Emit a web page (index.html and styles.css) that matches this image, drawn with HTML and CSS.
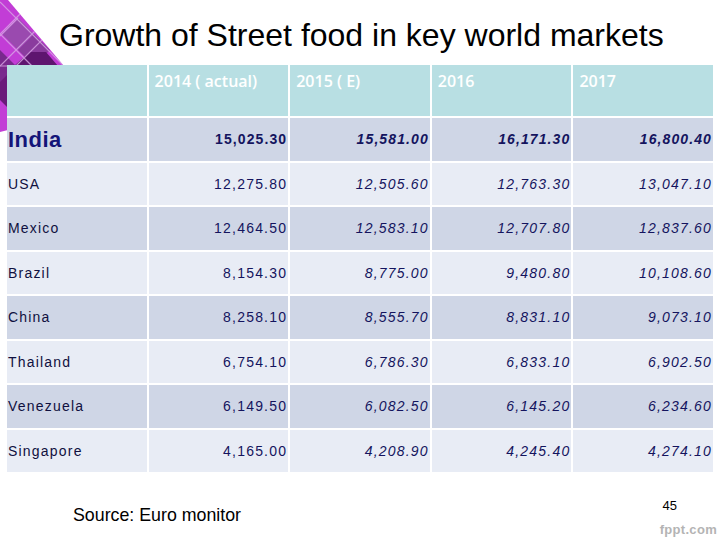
FILE: index.html
```html
<!DOCTYPE html>
<html>
<head>
<meta charset="utf-8">
<link rel="stylesheet" href="styles.css">
</head>
<body>
<div class="slide">
  <svg class="deco" width="70" height="135" viewBox="0 0 70 135">
    <defs>
      <clipPath id="tri"><polygon points="0,0 8,0 64,66 64,118 0,118"/></clipPath>
    </defs>
    <g clip-path="url(#tri)">
      <rect x="0" y="0" width="70" height="135" fill="#c23ed6"/>
      <polygon points="2,34 18,18 34,34 18,50" fill="#9a4ab0"/>
      <polygon points="18,50 34,34 50,50 34,66" fill="#8a3c9e"/>
      <polygon points="14,66 30,52 46,52 58,66" fill="#5e1670"/>
      <polygon points="0,66 64,66 64,118 0,118" fill="#6a1a7a"/>
      <polygon points="0,50 16,66 0,82" fill="#7a2a8e"/>
      <g stroke="#d9a8e6" stroke-width="1.2" fill="none" opacity="0.8">
        <line x1="0" y1="34" x2="34" y2="0"/>
        <line x1="0" y1="66" x2="50" y2="16"/>
        <line x1="10" y1="72" x2="66" y2="16"/>
        <line x1="0" y1="2" x2="64" y2="66"/>
        <line x1="0" y1="34" x2="34" y2="68"/>
        <line x1="18" y1="18" x2="0" y2="36"/>
        <line x1="0" y1="66" x2="64" y2="66"/>
      </g>
    </g>
    <polygon points="0,100 8,108 8,130 0,132" fill="#c23ed6"/>
  </svg>
  <h1 class="title">Growth of Street food in key world markets</h1>
  <div class="grid">
    <div class="hd"></div>
    <div class="hd">2014 ( actual)</div>
    <div class="hd">2015 ( E)</div>
    <div class="hd">2016</div>
    <div class="hd">2017</div>

    <div class="c lbl dark big">India</div>
    <div class="c num dark b">15,025.30</div>
    <div class="c num dark b i">15,581.00</div>
    <div class="c num dark b i">16,171.30</div>
    <div class="c num dark b i">16,800.40</div>

    <div class="c lbl light">USA</div>
    <div class="c num light">12,275.80</div>
    <div class="c num light i">12,505.60</div>
    <div class="c num light i">12,763.30</div>
    <div class="c num light i">13,047.10</div>

    <div class="c lbl dark">Mexico</div>
    <div class="c num dark">12,464.50</div>
    <div class="c num dark i">12,583.10</div>
    <div class="c num dark i">12,707.80</div>
    <div class="c num dark i">12,837.60</div>

    <div class="c lbl light">Brazil</div>
    <div class="c num light">8,154.30</div>
    <div class="c num light i">8,775.00</div>
    <div class="c num light i">9,480.80</div>
    <div class="c num light i">10,108.60</div>

    <div class="c lbl dark">China</div>
    <div class="c num dark">8,258.10</div>
    <div class="c num dark i">8,555.70</div>
    <div class="c num dark i">8,831.10</div>
    <div class="c num dark i">9,073.10</div>

    <div class="c lbl light">Thailand</div>
    <div class="c num light">6,754.10</div>
    <div class="c num light i">6,786.30</div>
    <div class="c num light i">6,833.10</div>
    <div class="c num light i">6,902.50</div>

    <div class="c lbl dark">Venezuela</div>
    <div class="c num dark">6,149.50</div>
    <div class="c num dark i">6,082.50</div>
    <div class="c num dark i">6,145.20</div>
    <div class="c num dark i">6,234.60</div>

    <div class="c lbl light">Singapore</div>
    <div class="c num light">4,165.00</div>
    <div class="c num light i">4,208.90</div>
    <div class="c num light i">4,245.40</div>
    <div class="c num light i">4,274.10</div>
  </div>
  <div class="footer">
    <div class="source">Source: Euro monitor</div>
    <div class="page">45</div>
  </div>
  <div class="brand">fppt.com</div>
</div>
</body>
</html>
```

FILE: styles.css
```css
html, body {
  margin: 0;
  padding: 0;
  background: #ffffff;
}
.slide {
  position: relative;
  width: 720px;
  height: 540px;
  overflow: hidden;
  font-family: "Liberation Sans", Arial, sans-serif;
}
.deco {
  position: absolute;
  left: 0;
  top: 0;
}
.title {
  position: relative;
  margin: 0;
  height: 65px;
  box-sizing: border-box;
  padding: 17px 0 0 59px;
  font-size: 32px;
  line-height: 36px;
  font-weight: normal;
  color: #000000;
}
.grid {
  position: relative;
  margin-left: 7px;
  width: 706px;
  display: grid;
  grid-template-columns: repeat(5, 1fr);
  grid-template-rows: 51px repeat(8, 42.5px);
  gap: 2px;
  background: #ffffff;
}
.hd {
  background: #b8dfe3;
  color: #ffffff;
  font-family: "Open Sans", sans-serif;
  font-size: 16px;
  font-weight: 600;
  line-height: 20px;
  padding: 6px 0 0 6px;
}
.c {
  display: flex;
  align-items: center;
  font-size: 14px;
  letter-spacing: 1.2px;
  color: #14145e;
}
.dark { background: #cfd6e6; }
.light { background: #e8ecf5; }
.lbl {
  padding-left: 1px;
  color: #101040;
}
.num {
  justify-content: flex-end;
  padding-right: 1px;
}
.big {
  font-size: 22px;
  font-weight: bold;
  letter-spacing: 0.5px;
  color: #141478;
  padding-top: 1px;
}
.b { font-weight: bold; letter-spacing: 1.1px; }
.i { font-style: italic; }
.footer {
  display: flex;
  justify-content: space-between;
  align-items: flex-start;
  padding: 26px 43px 0 73px;
}
.source {
  font-size: 17.8px;
  line-height: 20px;
  margin-top: 7px;
  color: #000000;
}
.page {
  font-size: 13px;
  line-height: 16px;
  color: #000000;
}
.brand {
  position: absolute;
  right: 3px;
  bottom: 3px;
  font-size: 13px;
  font-weight: bold;
  color: #b4b4b4;
  letter-spacing: 0.3px;
}
```
